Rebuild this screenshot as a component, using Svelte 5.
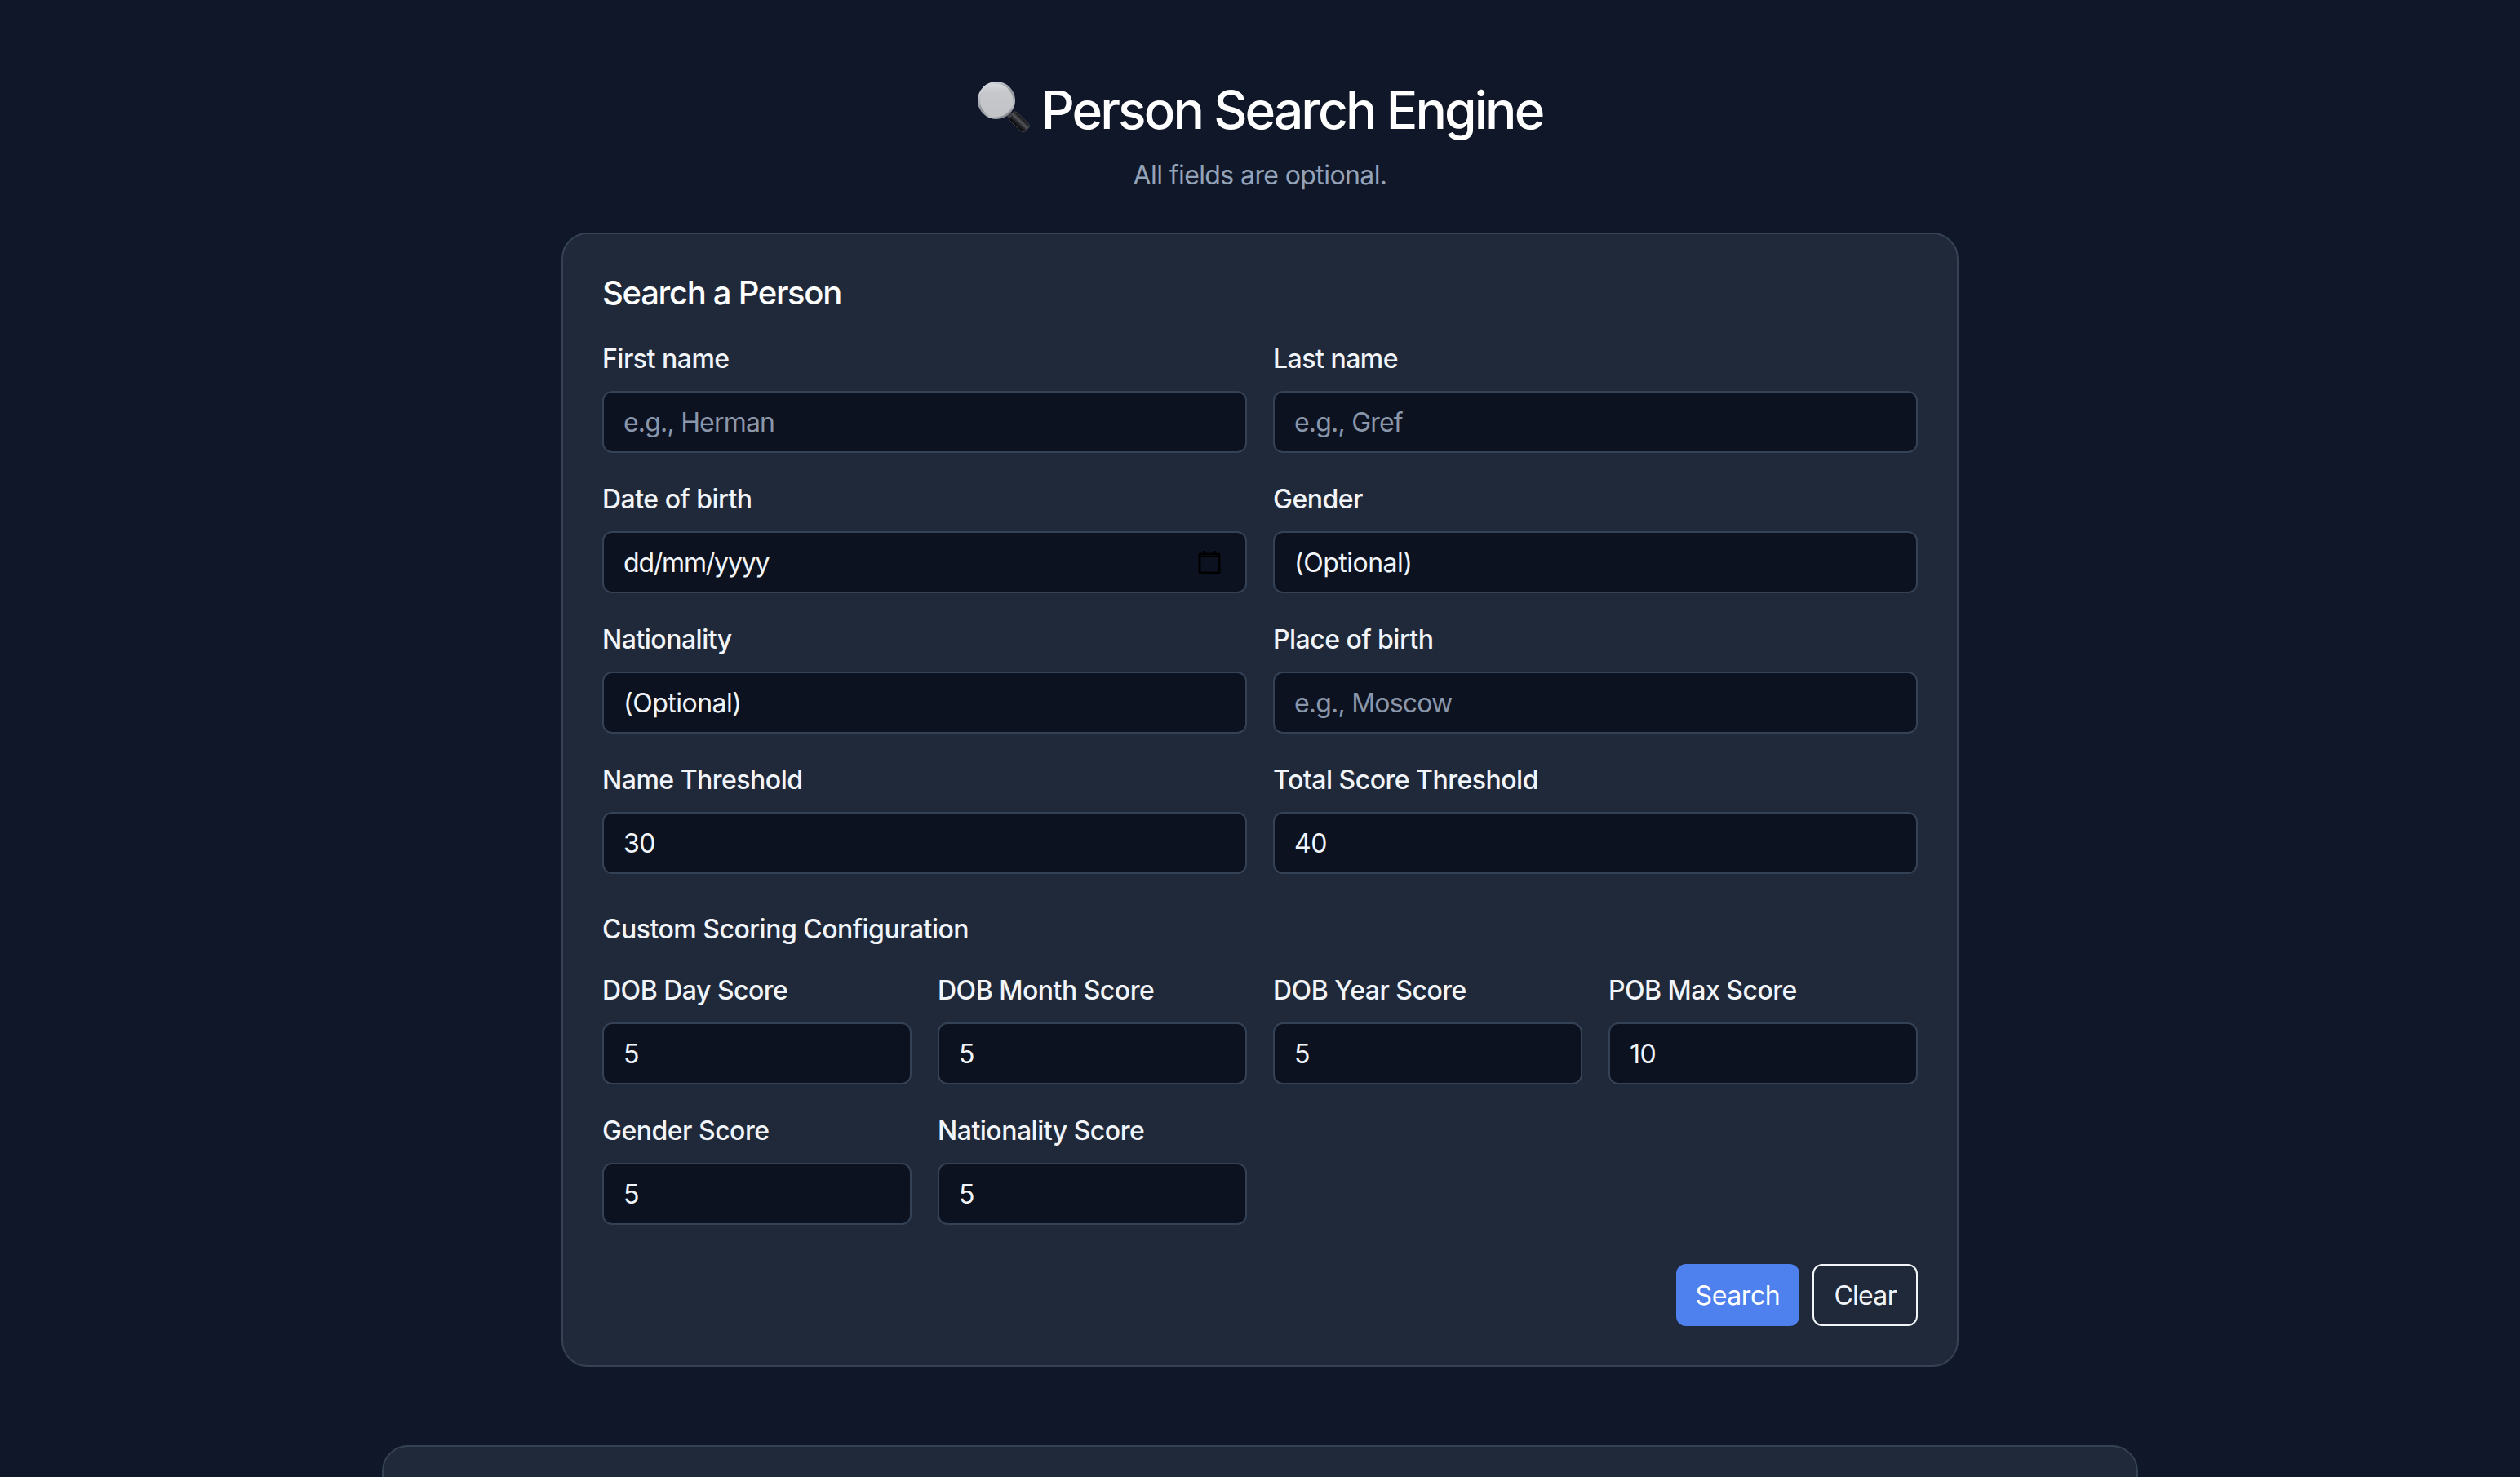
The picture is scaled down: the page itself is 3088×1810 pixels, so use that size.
<script lang="ts">
	const mainFields = [
		{ label: 'First name', placeholder: 'e.g., Herman' },
		{ label: 'Last name', placeholder: 'e.g., Gref' },
		{ label: 'Date of birth', value: 'dd/mm/yyyy', date: true },
		{ label: 'Gender', select: true },
		{ label: 'Nationality', select: true },
		{ label: 'Place of birth', placeholder: 'e.g., Moscow' },
		{ label: 'Name Threshold', value: '30' },
		{ label: 'Total Score Threshold', value: '40' }
	];

	const scoreFields = [
		{ label: 'DOB Day Score', value: '5' },
		{ label: 'DOB Month Score', value: '5' },
		{ label: 'DOB Year Score', value: '5' },
		{ label: 'POB Max Score', value: '10' },
		{ label: 'Gender Score', value: '5' },
		{ label: 'Nationality Score', value: '5' }
	];
</script>

<div class="page">
	<header class="header">
		<h1>
			<svg class="lens" viewBox="0 0 64 64" aria-hidden="true">
				<defs>
					<linearGradient id="ring" x1="0.2" y1="0" x2="0.8" y2="1">
						<stop offset="0" stop-color="#dfe3ea" />
						<stop offset="0.5" stop-color="#8f9297" />
						<stop offset="0.8" stop-color="#c4c6ca" />
						<stop offset="1" stop-color="#6a6c70" />
					</linearGradient>
					<linearGradient id="glass" x1="0" y1="0" x2="0" y2="1">
						<stop offset="0" stop-color="#dcdde0" />
						<stop offset="0.25" stop-color="#c7c8cb" />
						<stop offset="1" stop-color="#c2c3c7" />
					</linearGradient>
					<linearGradient id="grip" x1="0" y1="0" x2="0" y2="1">
						<stop offset="0" stop-color="#0a0a0b" />
						<stop offset="0.4" stop-color="#55565a" />
						<stop offset="0.6" stop-color="#2a2b2e" />
						<stop offset="1" stop-color="#020203" />
					</linearGradient>
				</defs>
				<g transform="translate(41 40) rotate(44)">
					<rect x="0" y="-6.5" width="27" height="13" rx="4" fill="url(#grip)" stroke="#4d4f54" stroke-width="0.8" />
				</g>
				<path d="M36 38 L41 43" stroke="#3c3e44" stroke-width="6" />
				<circle cx="23" cy="23" r="21.5" fill="url(#glass)" stroke="url(#ring)" stroke-width="3" />
			</svg>
			Person Search Engine
		</h1>
		<p class="subtitle">All fields are optional.</p>
	</header>

	<form class="card search-card" onsubmit={(e) => e.preventDefault()}>
		<h2>Search a Person</h2>

		<div class="grid two">
			{#each mainFields as field}
				<div class="field">
					<label for={field.label}>{field.label}</label>
					{#if field.select}
						<select id={field.label}>
							<option>(Optional)</option>
						</select>
					{:else if field.date}
						<div class="date-wrap">
							<input class="date" id={field.label} type="text" value={field.value} />
							<svg class="calendar" viewBox="0 0 28 30" aria-hidden="true">
								<path d="M3 5h22a1 1 0 0 1 1 1v21a1 1 0 0 1-1 1H3a1 1 0 0 1-1-1V6a1 1 0 0 1 1-1z" fill="none" stroke="#000" stroke-width="3" />
								<path d="M2 7h24v2H2zM6 1h2v5H6zM20 1h2v5h-2z" fill="#000" />
							</svg>
						</div>
					{:else}
						<input id={field.label} type="text" placeholder={field.placeholder} value={field.value ?? ''} />
					{/if}
				</div>
			{/each}
		</div>

		<h3>Custom Scoring Configuration</h3>

		<div class="grid four">
			{#each scoreFields as field}
				<div class="field">
					<label for={field.label}>{field.label}</label>
					<input id={field.label} type="text" value={field.value} />
				</div>
			{/each}
		</div>

		<div class="actions">
			<button type="submit" class="btn primary">Search</button>
			<button type="button" class="btn outline">Clear</button>
		</div>
	</form>

	<section class="card results-card"></section>
</div>

<style>
	:global(body) {
		margin: 0;
		background: #101729;
	}

	.page {
		height: 1810px;
		overflow: hidden;
		box-sizing: border-box;
		padding-top: 96px;
		font-family: Inter, 'Noto Sans', sans-serif;
		color: #f1f5f9;
	}

	.header {
		text-align: center;
		margin-bottom: 46px;
	}

	h1 {
		margin: 0;
		color: #fff;
		font-size: 64px;
		font-weight: 550;
		line-height: 77px;
		letter-spacing: -2.9px;
	}

	.lens {
		width: 64px;
		height: 64px;
		vertical-align: -6px;
	}

	.subtitle {
		margin: 18px 0 0;
		color: #94a3b8;
		font-size: 32px;
		line-height: 48px;
		letter-spacing: -0.6px;
	}

	.card {
		box-sizing: border-box;
		margin: 0 auto;
		background: #20293a;
		border: 2px solid #354154;
		border-radius: 32px;
	}

	.search-card {
		width: 1712px;
		padding: 48px;
	}

	.results-card {
		width: 2152px;
		height: 400px;
		margin-top: 96px;
	}

	h2 {
		margin: 0 0 32px;
		color: #fff;
		font-size: 40px;
		font-weight: 550;
		line-height: 48px;
		letter-spacing: -1.3px;
	}

	h3 {
		margin: 44px 0 26px;
		color: #f1f5f9;
		font-size: 32px;
		font-weight: 500;
		line-height: 48px;
		letter-spacing: -0.5px;
	}

	.grid {
		display: grid;
		gap: 32px;
	}

	.two {
		grid-template-columns: repeat(2, 1fr);
	}

	.four {
		grid-template-columns: repeat(4, 1fr);
	}

	.field {
		display: flex;
		flex-direction: column;
		min-width: 0;
	}

	label {
		padding-top: 1px;
		margin-bottom: 15px;
		color: #f1f5f9;
		font-size: 32px;
		font-weight: 500;
		line-height: 48px;
		letter-spacing: -0.5px;
	}

	input,
	select {
		box-sizing: border-box;
		width: 100%;
		height: 76px;
		padding: 0 24px;
		background: #0c121f;
		border: 2px solid #354154;
		border-radius: 12px;
		color: #f1f5f9;
		font-family: inherit;
		font-size: 32px;
		letter-spacing: -0.5px;
		appearance: none;
		outline: none;
	}

	input::placeholder {
		color: #8a96aa;
		opacity: 1;
		letter-spacing: -0.8px;
	}

	.date {
		letter-spacing: -1.2px;
	}

	.date-wrap {
		position: relative;
	}

	.calendar {
		position: absolute;
		top: 23px;
		right: 32px;
		width: 28px;
		height: 30px;
	}

	.actions {
		display: flex;
		justify-content: flex-end;
		gap: 16px;
		margin-top: 48px;
	}

	.btn {
		box-sizing: border-box;
		height: 76px;
		padding: 0 24px;
		border-radius: 12px;
		color: #f1f5f9;
		font-family: inherit;
		font-size: 32px;
		font-weight: 400;
		letter-spacing: -0.7px;
		cursor: pointer;
	}

	.primary {
		background: #4f81ee;
		border: none;
		color: #fff;
		letter-spacing: -0.4px;
	}

	.outline {
		background: transparent;
		border: 2px solid #f1f5f9;
	}
</style>
